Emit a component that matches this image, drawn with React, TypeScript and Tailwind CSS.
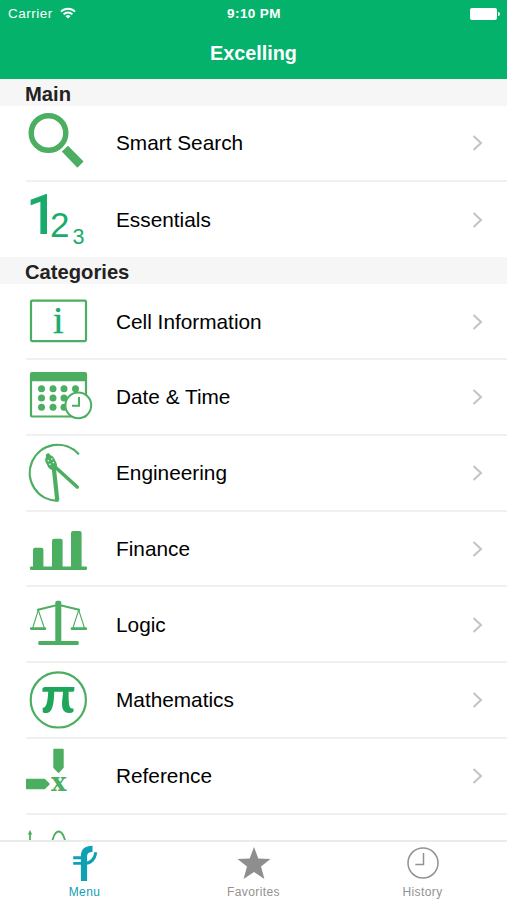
import React from 'react';

const GREEN = '#4bae60';
const EMERALD = '#19ab69';

// all row icons are drawn on the same 90x75 canvas
const IconCanvas = ({ children }: { children: React.ReactNode }) => (
  <svg className="mt-[1.5px] h-[75px] w-[90px] shrink-0 overflow-visible" viewBox="0 0 90 75" fill="none">
    {children}
  </svg>
);

const SearchIcon = () => (
  <IconCanvas>
    <circle cx="22.5" cy="27" r="17.3" stroke={GREEN} strokeWidth="5.4" />
    <path d="M35.8 45.6 42 39.8 57.6 55.4 51.4 61.8Z" fill={GREEN} />
  </IconCanvas>
);

const EssentialsIcon = () => (
  <IconCanvas>
    <text fill={EMERALD} fontFamily="'Liberation Sans', sans-serif">
      <tspan x="0" y="50.6" fontSize="56" fontWeight="500" fontFamily="Roboto, sans-serif">1</tspan>
      <tspan x="24" y="53.9" fontSize="35">2</tspan>
      <tspan x="46.5" y="60.5" fontSize="21.5">3</tspan>
    </text>
  </IconCanvas>
);

const CellIcon = () => (
  <IconCanvas>
    <rect x="5" y="16.6" width="55" height="40.5" rx="1" stroke={GREEN} strokeWidth="2.2" />
    <text
      x="32.3"
      y="49.3"
      fontSize="38"
      textAnchor="middle"
      fill={EMERALD}
      stroke={EMERALD}
      strokeWidth="0.4"
      fontFamily="'Liberation Serif', serif"
    >
      i
    </text>
  </IconCanvas>
);

const DateIcon = () => (
  <IconCanvas>
    <rect x="5" y="13" width="55" height="43.5" rx="1" stroke={GREEN} strokeWidth="2.2" />
    <path d="M5 13h55v8.2H5Z" fill={GREEN} />
    {[28.7, 38, 47.3].map((y) =>
      [15.5, 27, 38, 49.5].map((x) => <circle key={`${x}-${y}`} cx={x} cy={y} r="3.5" fill={GREEN} />)
    )}
    <circle cx="52.3" cy="45.3" r="12.9" fill="#fff" stroke={GREEN} strokeWidth="2" />
    <path d="M53 37v8.8h-7" stroke={GREEN} strokeWidth="2" />
  </IconCanvas>
);

const EngineeringIcon = () => (
  <IconCanvas>
    <path d="M52.3 17.8A28 28 0 1 0 31.7 64.8" stroke={GREEN} strokeWidth="2.2" strokeLinecap="round" />
    <path d="M27.5 29 31.3 64.5" stroke={GREEN} strokeWidth="4.2" />
    <path d="M27 29 51.2 51" stroke={GREEN} strokeWidth="3.6" strokeLinecap="round" />
    <path d="M22 19.5 23 22" stroke={GREEN} strokeWidth="4.5" strokeLinecap="round" />
    <path d="M23.8 24 26.3 29" stroke={GREEN} strokeWidth="9.4" strokeLinecap="round" />
    <g fill="#fff">
      <circle cx="22.3" cy="24.7" r="0.8" />
      <circle cx="25.8" cy="23" r="0.8" />
      <circle cx="24" cy="28.2" r="0.8" />
      <circle cx="27.4" cy="26.6" r="0.8" />
    </g>
  </IconCanvas>
);

const FinanceIcon = () => (
  <IconCanvas>
    <g fill={GREEN}>
      <rect x="7" y="35.7" width="10.4" height="21" rx="2" />
      <rect x="26" y="26.8" width="10.6" height="30" rx="2" />
      <rect x="45" y="19" width="10.6" height="38" rx="2" />
      <rect x="4" y="54.4" width="57" height="3.5" rx="1.2" />
    </g>
  </IconCanvas>
);

const LogicIcon = () => (
  <IconCanvas>
    <g fill={GREEN}>
      <rect x="29.3" y="13.7" width="6" height="43" rx="1.8" />
      <rect x="12.3" y="54" width="40.4" height="4" rx="1.2" />
      <rect x="4" y="40.3" width="16.2" height="2.6" rx="1.2" />
      <rect x="44.7" y="40.3" width="16.4" height="2.6" rx="1.2" />
    </g>
    <path d="M12 22.8 32.3 17.8 53 22.8" stroke={GREEN} strokeWidth="2.2" strokeLinecap="round" />
    <path d="M6.7 41 12.3 23 18.3 41M46.9 41 52.7 23 58.5 41" stroke={GREEN} strokeWidth="1.1" />
  </IconCanvas>
);

const MathIcon = () => (
  <IconCanvas>
    <circle cx="32.3" cy="36.9" r="27.6" stroke={GREEN} strokeWidth="2.2" />
    <text
      transform="translate(32.2 50) scale(1.12 1)"
      fontSize="50"
      fontWeight="700"
      textAnchor="middle"
      fill="#1fa65b"
      fontFamily="Lato, sans-serif"
    >
      π
    </text>
  </IconCanvas>
);

const ReferenceIcon = () => (
  <IconCanvas>
    <g fill={GREEN} stroke={GREEN} strokeWidth="1.4" strokeLinejoin="round">
      <path d="M28 10.5h9v18l-4.5 4.8L28 28.5Z" />
      <path d="M.7 40.5h17.8l4.6 4.5-4.6 4.6H.7Z" />
    </g>
    <text x="32.7" y="52" fontSize="26" fontWeight="700" textAnchor="middle" fill={GREEN} fontFamily="'DejaVu Serif', serif">x</text>
  </IconCanvas>
);

const StatisticsIcon = () => (
  <IconCanvas>
    <path d="M4 17v40" stroke={GREEN} strokeWidth="1.8" />
    <path d="M1.8 18.5 4 14 6.2 18.5Z" fill={GREEN} />
    <path d="M20 45C26 30 26.5 15.5 32.7 15.5S39.4 30 45.5 45" stroke={GREEN} strokeWidth="1.8" />
  </IconCanvas>
);

interface MenuItem {
  label: string;
  icon: React.FC;
}

const sections: { title: string; items: MenuItem[] }[] = [
  {
    title: 'Main',
    items: [
      { label: 'Smart Search', icon: SearchIcon },
      { label: 'Essentials', icon: EssentialsIcon },
    ],
  },
  {
    title: 'Categories',
    items: [
      { label: 'Cell Information', icon: CellIcon },
      { label: 'Date & Time', icon: DateIcon },
      { label: 'Engineering', icon: EngineeringIcon },
      { label: 'Finance', icon: FinanceIcon },
      { label: 'Logic', icon: LogicIcon },
      { label: 'Mathematics', icon: MathIcon },
      { label: 'Reference', icon: ReferenceIcon },
      // cut off by the tab bar, only the icon's top shows
      { label: '', icon: StatisticsIcon },
    ],
  },
];

const StatusBar = () => (
  <div className="grid h-7 grid-cols-3 items-center pr-[7px] pl-2 text-[13.5px] tracking-[0.5px]">
    <div className="flex items-center gap-[7px]">
      <span>Carrier</span>
      <svg className="mb-0.5 h-[12px] w-[16px]" viewBox="0 0 16 12" fill="none" stroke="#fff" strokeWidth="1.9">
        <path d="M1 4.6a10 10 0 0 1 14 0M3.6 7.4a6.2 6.2 0 0 1 8.8 0" />
        <path d="M8 11.6 5.5 9.2a3.6 3.6 0 0 1 5 0Z" fill="#fff" stroke="none" />
      </svg>
    </div>
    <div className="text-center font-bold tracking-[0.4px]">9:10 PM</div>
    <div className="flex items-center justify-end gap-px">
      <div className="h-3 w-[27px] rounded-[2px] bg-white" />
      <div className="h-1 w-[2px] rounded-r-full bg-white" />
    </div>
  </div>
);

const MenuRow = ({ item, last }: { item: MenuItem; last: boolean }) => {
  const Icon = item.icon;
  return (
    <div className="h-[75.75px] pl-[26px]">
      <div className={`flex h-full items-center pr-6 ${last ? '' : 'border-b-2 border-[#f0f0f0]'}`}>
        <Icon />
        <span className="flex-1 text-[20.8px] text-black">{item.label}</span>
        <svg className="mt-px h-4 w-[11px]" viewBox="0 0 11 16" fill="none" stroke="#c4c4c8" strokeWidth="2.1">
          <path d="M1.5 1 9 8 1.5 15" />
        </svg>
      </div>
    </div>
  );
};

const TabBar = () => (
  <div className="grid h-[60px] shrink-0 grid-cols-3 border-t-2 border-[#ebebeb] bg-white text-[12px] leading-[14px] tracking-[0.4px] text-[#929292]">
    <div className="flex flex-col items-center gap-1 pt-[3px] text-[#10a0b4]">
      <svg className="h-9 w-[26px]" viewBox="0 0 26 36" fill="none" stroke="currentColor">
        <path d="M12 36V11Q12 3.8 20.5 3.8" strokeWidth="6.2" />
        <path d="M1.2 12.7H12M1.2 18.4H12C19 18.4 22.8 14 23.8 7.2" strokeWidth="2.9" />
      </svg>
      <span>Menu</span>
    </div>
    <div className="flex flex-col items-center gap-1 pt-[3px]">
      <svg className="h-9 w-9" viewBox="0 0 36 36" fill="#8e8e8e">
        <path d="M18 2 22.3 13.5 34.5 14 25 21.6 28.4 34 18 27 7.6 34 11 21.6 1.5 14 13.7 13.5Z" />
      </svg>
      <span>Favorites</span>
    </div>
    <div className="flex flex-col items-center gap-1 pt-[3px]">
      <svg className="h-9 w-9" viewBox="0 0 36 36" fill="none" stroke="#929292" strokeWidth="1.5">
        <circle cx="18" cy="18" r="15" />
        <path d="M18.5 8V19.5H10.3" />
      </svg>
      <span>History</span>
    </div>
  </div>
);

const App: React.FC = () => {
  return (
    <div className="flex h-[900px] w-[507px] flex-col overflow-hidden bg-white font-['Liberation_Sans',sans-serif]">
      <header className="h-[79px] shrink-0 bg-[#04b26b] text-white">
        <StatusBar />
        <h1 className="pt-[9px] text-center text-[19.8px] leading-8 font-bold">Excelling</h1>
      </header>

      <main className="min-h-0 flex-1 overflow-hidden">
        {sections.map((section) => (
          <section key={section.title}>
            <h2 className="h-[26.9px] bg-[#f6f6f6] pl-[25px] text-[20.2px] leading-[30px] font-bold text-[#222]">
              {section.title}
            </h2>
            {section.items.map((item, i) => (
              <MenuRow key={item.label} item={item} last={i === section.items.length - 1} />
            ))}
          </section>
        ))}
      </main>

      <TabBar />
    </div>
  );
};

export default App;
